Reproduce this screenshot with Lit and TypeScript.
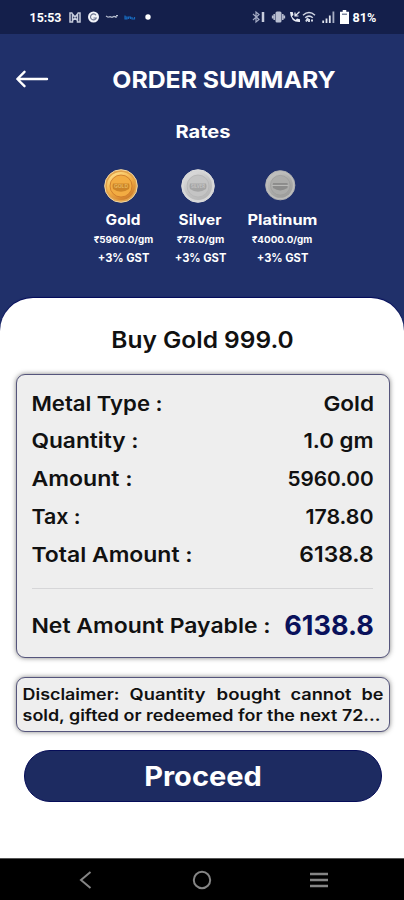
import { LitElement, html, svg, css } from "lit";
import { customElement } from "lit/decorators.js";

/* One line of text fitted to a given ink width; the box is as tall as the capitals. */
const line = (text: string, width: number, size: number, weight = 600, cls = "") => {
  const cap = Math.round(size * 0.727 * 10) / 10;
  const side = size * 0.03;
  return html`<svg class="line ${cls}" width=${width} height=${cap}>
    <text x=${-side} y=${cap} font-size=${size} font-weight=${weight}
      textLength=${width + side * 2} lengthAdjust="spacingAndGlyphs">${text}</text>
  </svg>`;
};

const metals = [
  { name: "Gold", nameW: 34, rate: "₹5960.0/gm", rateW: 59, size: 34, cls: "gold", word: "GOLD",
    rim: "#e2a24a", edge: "#f3d9a4", shine: "#ffe08a", face: "#f2ac42", low: "#c97628", bar: "#c27a22" },
  { name: "Silver", nameW: 42, rate: "₹78.0/gm", rateW: 47, size: 34, cls: "silver", word: "SILVER",
    rim: "#d6d6d6", edge: "#dedede", shine: "#dcdcdc", face: "#c4c4c4", low: "#b5b5b5", bar: "#9d9d9d" },
  { name: "Platinum", nameW: 69, rate: "₹4000.0/gm", rateW: 60, size: 30.5, cls: "platinum", word: "",
    rim: "#bdbdbb", edge: "#b4b4b4", shine: "#c4c4c2", face: "#acacaa", low: "#9c9c9a", bar: "#858583" },
];

const rows = [
  { label: "Metal Type :", lw: 130, value: "Gold", vw: 49.5, vs: 20.5 },
  { label: "Quantity :", lw: 106, value: "1.0 gm", vw: 69, vs: 20.5 },
  { label: "Amount :", lw: 100, value: "5960.00", vw: 85, vs: 20.5 },
  { label: "Tax :", lw: 48, value: "178.80", vw: 67, vs: 20.5 },
  { label: "Total Amount :", lw: 160, value: "6138.8", vw: 73, vs: 22 },
];

@customElement("app-root")
export class AppRoot extends LitElement {
  static styles = css`
    :host { display: block; height: 900px; font-family: Inter, "Noto Sans", sans-serif; }
    * { box-sizing: border-box; }
    svg { display: block; flex: none; overflow: visible; }
    .line { fill: currentColor; }
    .screen { height: 900px; display: flex; flex-direction: column; background: #20306a; overflow: hidden; color: #fff; }
    .status { height: 34px; flex: none; background: #141f4b; display: flex; justify-content: space-between; padding: 0 28px 0 30px; align-items: center; }
    .status .line { font-family: Roboto, sans-serif; }
    .group { display: flex; align-items: center; }
    .head { height: 91px; flex: none; display: flex; align-items: center; padding-left: 16px; }
    .head .line { margin-left: 65px; }
    .back { margin-bottom: 2px; }
    .rates { height: 173px; flex: none; display: flex; flex-direction: column; align-items: center; padding-left: 2px; }
    .coins { display: flex; margin: 31px 0 0 4px; width: 224px; justify-content: space-between; }
    .metal { display: flex; flex-direction: column; align-items: center; }
    .coin { height: 34px; display: flex; align-items: center; margin-right: 4px; }
    .coin text { font-size: 5px; font-weight: 600; }
    .name { margin-top: 12px; }
    .rate { margin-top: 11px; }
    .gst { margin-top: 11px; }
    .gold { width: 60px; }
    .silver { width: 52px; }
    .platinum { width: 70px; }
    .sheet { height: 560px; flex: none; background: #fff; color: #111; border-radius: 33px 33px 0 0; box-shadow: 0 -1px 1px #02095a; padding: 33.500px 14px 0 16px; display: flex; flex-direction: column; align-items: center; }
    .box { width: 374px; border: 1.5px solid #55557c; border-radius: 9px; background: #eee; box-shadow: 0 0 5px rgba(30, 30, 30, .55); }
    .title { margin-right: 2px; }
    .summary { margin-top: 26.500px; height: 284px; padding: 9px 16px 0 15px; }
    .row { display: flex; align-items: center; justify-content: space-between; height: 37.7px; }
    .divider { height: 1px; background: #d6d6d8; margin: 15px 0 17.5px; }
    .net { color: #09115b; }
    .note { height: 55px; margin-top: 19px; padding: 11px 5px 0 6px; }
    .words { display: flex; justify-content: space-between; margin-bottom: 9.5px; width: 360px; }
    .proceed { width: 358px; height: 52px; margin: 18px 1px 0 0; border: 1.5px solid #050c58; border-radius: 26px; background: #1d2b61; color: #fff; display: flex; align-items: center; justify-content: center; padding: 0; font-family: inherit; }
    .nav { flex: 1; background: #000; border-top: 1px solid #555; display: flex; align-items: center; padding-left: 79px; }
    .home { margin-left: 101px; }
    .menu { margin-left: 98px; }
    .g1 { margin-left: 8px; } .g2 { margin-left: 7px; } .g3 { margin-left: 7px; } .g4 { margin-left: 6px; } .g5 { margin-left: 10px; }
    .r2 { margin-left: 7px; } .r3 { margin-left: 4px; } .r4 { margin-left: 1px; } .r5 { margin-left: 6px; } .r6 { margin-left: 5px; } .r7 { margin-left: 4px; }
  `;

  private coin(m: (typeof metals)[number]) {
    const id = `face-${m.cls}`;
    return html`<svg width=${m.size} height=${m.size} viewBox="0 0 34 34">
      <defs><linearGradient id=${id} x1=".2" y1="0" x2=".8" y2="1">
        <stop offset="0" stop-color=${m.shine}></stop><stop offset=".5" stop-color=${m.face}></stop><stop offset="1" stop-color=${m.low}></stop>
      </linearGradient></defs>
      <circle cx="17" cy="17" r="16.300" fill=${m.rim} stroke=${m.edge} stroke-width="1"></circle>
      <circle cx="17" cy="17" r="14" fill="url(#${id})"></circle>
      <circle cx="17" cy="17" r="11" fill=${m.face} stroke=${m.low} stroke-width=".8"></circle>
      <path d="M9 14.500h16q1.200 2.700 0 5.500-8 5.500-16 0-1.200-2.800 0-5.500z" fill=${m.bar} opacity=".8"></path>
      ${m.word
        ? svg`<text x="10" y="18.500" fill=${m.shine} opacity=".6" textLength="14" lengthAdjust="spacingAndGlyphs">${m.word}</text>`
        : svg`<path d="M8 17.200h18" stroke=${m.shine} stroke-width="1"></path>`}
    </svg>`;
  }

  render() {
    return html`<div class="screen">
      <div class="status">
        <div class="group">
          ${line("15:53", 31, 13.5, 700)}
          <svg class="g1" width="12" height="11" viewBox="0 0 12 11" fill="none" stroke="#c5cbdc" stroke-width="1.5"><path d="M3.500 1H1v9h2.500V2L6 5l2.500-3v8H11V1H8.500M3.500 8.500L6 6l2.500 2.500"></path></svg>
          <svg class="g2" width="11" height="12" viewBox="0 0 11 12"><circle cx="5.500" cy="6" r="5.500" fill="#f2f4fa"></circle><path d="M8 4.200A3 3 0 1 0 8.300 7H5.500" fill="none" stroke="#6d7590" stroke-width="1.100"></path></svg>
          <svg class="g3" width="12" height="4" viewBox="0 0 12 4"><path d="M0 1l2 1.200 2-.6 2 .8 2-1 2 .3V3M10 .7h2" fill="none" stroke="#b8bfd0" stroke-width="1.200"></path></svg>
          <svg class="g4" width="11" height="5" viewBox="0 0 11 5"><path d="M1 .5v3.300h2V2H1M4.500 4V2h2v2M8 2v2h2.500V2" fill="none" stroke="#1769bd" stroke-width="1.200"></path></svg>
          <svg class="g5" width="6" height="6"><circle cx="3" cy="3" r="2.700" fill="#fff"></circle></svg>
        </div>
        <div class="group">
          <svg width="13" height="12" viewBox="0 0 13 12" fill="none" stroke="#a5acc5" stroke-width="1.200"><path d="M1 3l6 5.500L4 11V1l3 2.500L1 9"></path><path d="M11 1v10" stroke="#c8cddd" stroke-width="2.500"></path></svg>
          <svg class="r2" width="13" height="12" viewBox="0 0 13 12"><rect x="3.500" y=".5" width="6" height="11" rx="1.500" fill="#b9bfd2"></rect><path d="M2.200 3v6M.6 4.500v3M10.800 3v6M12.400 4.500v3" stroke="#b9bfd2" stroke-width="1.500"></path></svg>
          <svg class="r3" width="12" height="12" viewBox="0 0 12 12"><path d="M1 1h2.700l.8 3-1.600 1.200q1.200 2.600 3.700 3.700L8 7.500l3 .8V11Q1.500 11.500 1 1z" fill="#e9ecf5"></path><path d="M6 1.500v3.500h3.500M6.300 4.700L10.500.8" fill="none" stroke="#e9ecf5" stroke-width="1.200"></path></svg>
          <svg class="r4" width="14" height="12" viewBox="0 0 14 12" fill="none" stroke="#d2d7e5" stroke-width="1.500"><path d="M1 4.200q6-5.400 12 0M3.200 6.800q3.800-3.400 7.600 0"></path><path d="M7 8v3M4 10.500L6 7M9 9.500h2" stroke-width="2"></path></svg>
          <svg class="r5" width="13" height="12" viewBox="0 0 13 12"><path d="M1.200 12V9.500M4.500 12V7.500M7.800 12V4.500" stroke="#dfe3ee" stroke-width="1.800"></path><path d="M11.400 12V.5" stroke="#a5acc3" stroke-width="1.800"></path></svg>
          <svg class="r6" width="9" height="14" viewBox="0 0 9 14"><path d="M2.700 0h3.600v1.800H9V14H0V1.800h2.700z" fill="#fff"></path><path d="M2 3.500h5v1.500H2z" fill="#7d869f"></path></svg>
          <span class="r7">${line("81%", 23, 13, 700)}</span>
        </div>
      </div>

      <div class="head">
        <svg class="back" width="32" height="18" viewBox="0 0 32 18" fill="none" stroke="#fff" stroke-width="2.400" stroke-linecap="round" stroke-linejoin="round"><path d="M31 9H1.500M8.500 1.800L1.300 9l7.200 7.200"></path></svg>
        ${line("ORDER SUMMARY", 222, 23.500, 700)}
      </div>

      <div class="rates">
        ${line("Rates", 54, 17.500, 700)}
        <div class="coins">
          ${metals.map((m) => html`<div class="metal ${m.cls}">
            <div class="coin">${this.coin(m)}</div>
            ${line(m.name, m.nameW, 14.300, 700, "name")}
            ${line(m.rate, m.rateW, 9.300, 700, "rate")}
            ${line("+3% GST", 51, 11.500, 700, "gst")}
          </div>`)}
        </div>
      </div>

      <div class="sheet">
        ${line("Buy Gold 999.0", 181, 22.500, 600, "title")}
        <div class="box summary">
          ${rows.map((r) => html`<div class="row">${line(r.label, r.lw, 20.500)}${line(r.value, r.vw, r.vs)}</div>`)}
          <div class="divider"></div>
          <div class="row">${line("Net Amount Payable :", 238, 20.500)}${line("6138.8", 88, 27, 700, "net")}</div>
        </div>
        <div class="box note">
          <div class="words">
            ${line("Disclaimer:", 96, 15.500)}${line("Quantity", 75, 15.500)}${line("bought", 63, 15.500)}${line("cannot", 60, 15.500)}${line("be", 21, 15.500)}
          </div>
          ${line("sold, gifted or redeemed for the next 72...", 357, 15.500)}
        </div>
        <button class="proceed">${line("Proceed", 116, 26.500, 700)}</button>
      </div>

      <div class="nav">
        <svg width="12" height="18" viewBox="0 0 12 18" fill="none" stroke="#858585" stroke-width="2"><path d="M11.500 1L2 9l9.500 8"></path></svg>
        <svg class="home" width="20" height="20"><circle cx="10" cy="10" r="8.200" fill="none" stroke="#858585" stroke-width="2"></circle></svg>
        <svg class="menu" width="18" height="16"><path d="M0 2h18M0 8h18M0 14h18" stroke="#858585" stroke-width="2.500"></path></svg>
      </div>
    </div>`;
  }
}
